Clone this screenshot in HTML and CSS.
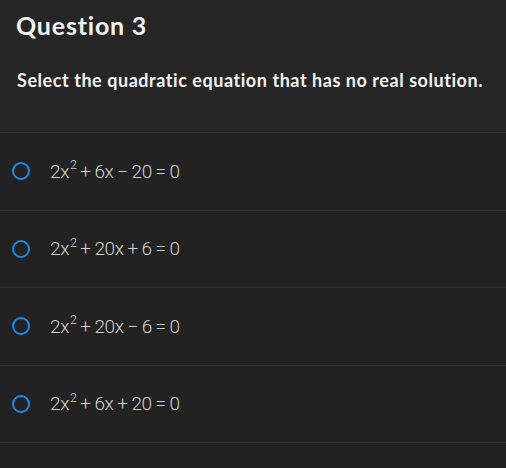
FILE: index.html
```html
<!DOCTYPE html>
<html>
<head>
<meta charset="utf-8">
<link rel="stylesheet" href="styles.css">
</head>
<body>
<div class="page">
  <header class="head">
    <h1 class="title">Question 3</h1>
    <p class="prompt">Select the quadratic equation that has no real solution.</p>
  </header>
  <ul class="options">
    <li class="option"><span class="radio"></span><span class="eq">2x<sup>2</sup><span class="op">+</span>6x<span class="op">−</span>20<span class="op">=</span>0</span></li>
    <li class="option"><span class="radio"></span><span class="eq">2x<sup>2</sup><span class="op">+</span>20x<span class="op">+</span>6<span class="op">=</span>0</span></li>
    <li class="option"><span class="radio"></span><span class="eq">2x<sup>2</sup><span class="op">+</span>20x<span class="op">−</span>6<span class="op">=</span>0</span></li>
    <li class="option"><span class="radio"></span><span class="eq">2x<sup>2</sup><span class="op">+</span>6x<span class="op">+</span>20<span class="op">=</span>0</span></li>
  </ul>
</div>
</body>
</html>
```
FILE: styles.css
```css
html, body {
  margin: 0;
  padding: 0;
  background: #222222;
}
.page {
  width: 506px;
  height: 468px;
  background: #222222;
  overflow: hidden;
}
.head {
  background: #262626;
  padding: 10px 16px 0 16px;
  height: 133px;
  box-sizing: border-box;
  border-bottom: 1px solid #333333;
}
.title {
  margin: 0;
  font-family: "Lato", sans-serif;
  font-weight: 700;
  font-size: 25px;
  line-height: 30px;
  letter-spacing: 0.8px;
  color: #f2f2f2;
}
.prompt {
  margin: 29px 0 0 1px;
  font-family: "Lato", sans-serif;
  font-weight: 700;
  font-size: 18px;
  line-height: 22px;
  letter-spacing: 0.55px;
  color: #f2f2f2;
}
.options {
  list-style: none;
  margin: 0;
  padding: 0;
}
.option {
  display: flex;
  align-items: center;
  height: 76.5px;
  border-bottom: 1px solid #333333;
  padding-left: 12px;
}
.radio {
  width: 14px;
  height: 14px;
  border: 2px solid #1a8be6;
  border-radius: 50%;
  flex: none;
}
.eq {
  margin-left: 20px;
  font-family: "Roboto", sans-serif;
  font-weight: 300;
  font-size: 19px;
  color: #d0d0d0;
  letter-spacing: -0.4px;
}
.eq sup {
  font-size: 12.5px;
  vertical-align: 8.5px;
  line-height: 0;
  margin-left: 1px;
}
.op {
  margin: 0 3.8px;
}
```
